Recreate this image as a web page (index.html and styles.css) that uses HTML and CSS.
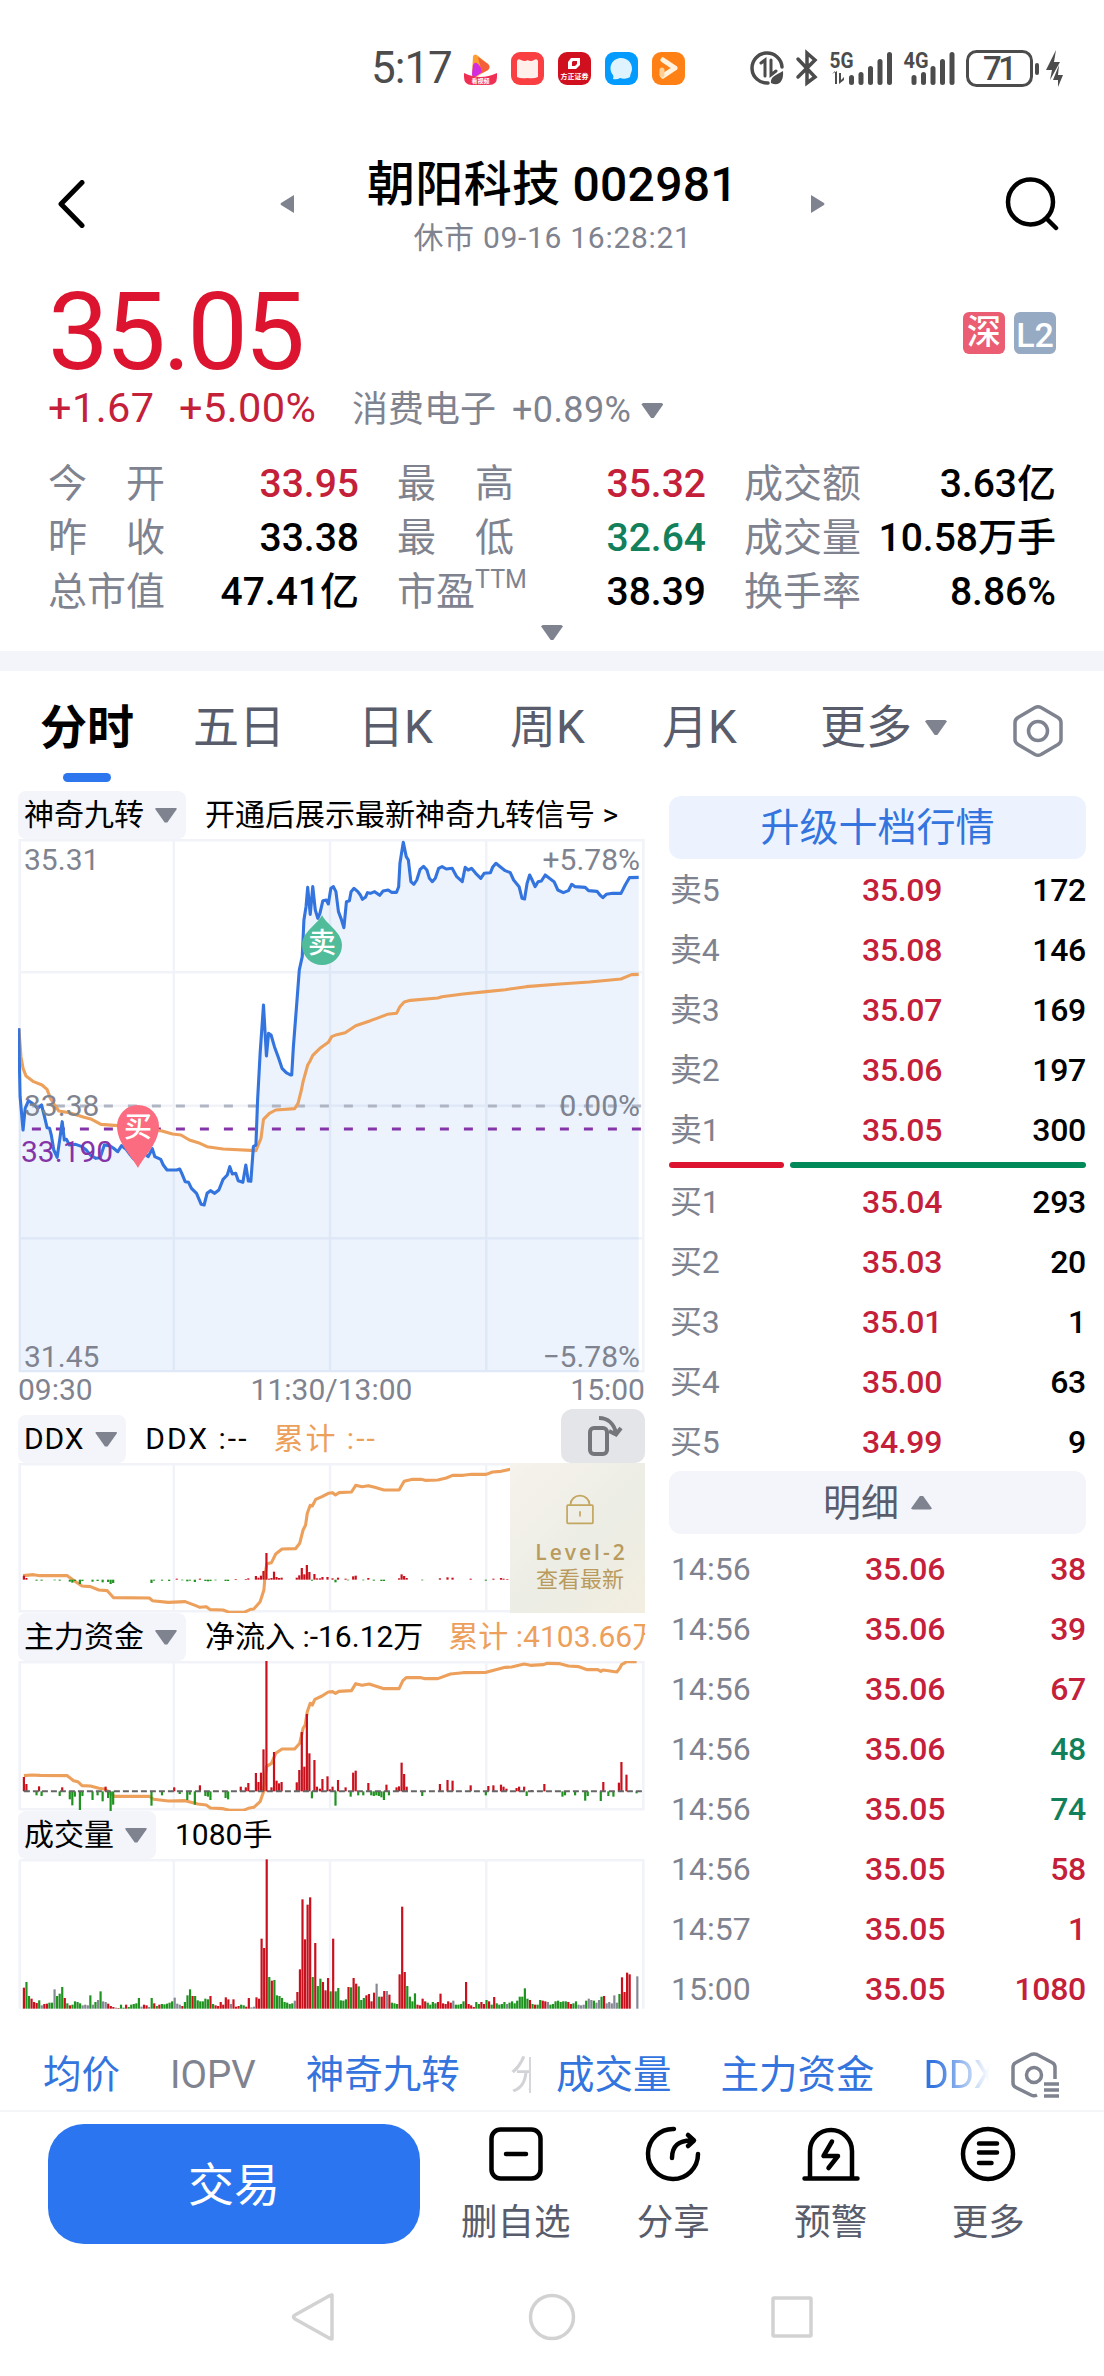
FILE: index.html
```html
<!DOCTYPE html>
<html lang="zh-CN">

<head>
    <meta charset="UTF-8">
    <meta name="viewport" content="width=device-width, initial-scale=1.0">
    <title>朝阳科技 002981</title>
    <link rel="stylesheet" href="styles.css">
</head>

<body>
    <div class="status-bar">
        <span class="clock">5:17</span>
        <div class="app-icons">
            <svg viewBox="0 0 33 33">
                <path d="M9 4 Q11 1 14 4 L24 12 Q27 15 24 18 L12 25 Q8 26 8 22 Z" fill="#ff9d2e" />
                <path d="M9 13 Q11 9 14 12 L20 19 L11 25 Q8 25 8 22 Z" fill="#d32be0" />
                <path d="M14 5 L24 12 Q27 15 24 18 L18 21 Z" fill="#f4603a" />
                <path d="M0 21 Q16 29 33 21 V25 Q33 33 25 33 H8 Q0 33 0 25 Z" fill="#f02f54" />
                <text x="16.500" y="31" class="app-text">看视频</text>
            </svg>
            <svg viewBox="0 0 33 33">
                <rect width="33" height="33" rx="9" fill="#f93f41" />
                <path d="M6 9 Q7 6 10 8 Q14 10 16.500 8 Q20 10 23 8 Q26 6 27 9 V25 Q23 27 16.500 26 Q10 27 6 25 Z" fill="#fff0ec" />
            </svg>
            <svg viewBox="0 0 33 33">
                <rect width="33" height="33" rx="9" fill="#d0101f" />
                <path d="M13 6 H22 V13 L18 17 H10 V10 Z M14 10 V14 H17 L19 12 V9 H15 Z" fill="#fff" fill-rule="evenodd" />
                <text x="16.500" y="27" class="app-text app-text-lg">方正证券</text>
            </svg>
            <svg viewBox="0 0 33 33">
                <rect width="33" height="33" rx="9" fill="#049bff" />
                <path d="M16 6 C23 6 27 11 27 17 C27 20 25 22 25 25 C22 27 18 27 15 26 Q12 28 8 27 Q9 25 8 23 C2 15 8 6 16 6 Z" fill="#dff3ff" />
            </svg>
            <svg viewBox="0 0 33 33">
                <rect width="33" height="33" rx="9" fill="#ff8115" />
                <path d="M11 8 L23 16 L11 24" fill="none" stroke="#fff3df" stroke-width="5" stroke-linecap="round" stroke-linejoin="round" />
                <path d="M10 18 V23" stroke="#ffcf96" stroke-width="5" stroke-linecap="round" />
            </svg>
        </div>
        <svg class="system-icons" viewBox="750 46 314 42">
            <g fill="none" stroke="#4c4c4c" stroke-width="3.500" stroke-linecap="round">
                <path d="M768 82 A15 15 0 1 1 782 66" />
                <path d="M761 62 L765 59 V75 M771 59 V74 L776 70" stroke-width="3" />
                <path d="M798 58 L815 76 L807 82 V52 L815 59 L798 76" />
                <rect x="967.500" y="50.500" width="64" height="34" rx="9" stroke-width="3" />
                <path d="M1037 64 V72" stroke-width="4" />
            </g>
            <g fill="#4c4c4c">
                <path d="M783 70 C784 80 779 86 771 82 C770 76 776 74 783 70 Z" />
                <path d="M832 73 L835 70 V83 H837 V70 M839 72 V83 L844 79 V76 L841 79 V72 Z" />
                <rect x="849" y="74" width="5" height="10" rx="2.500" />
                <rect x="858.500" y="71" width="5" height="13" rx="2.500" />
                <rect x="868" y="65" width="5" height="19" rx="2.500" />
                <rect x="877.500" y="58" width="5" height="26" rx="2.500" />
                <rect x="887" y="51" width="5" height="33" rx="2.500" />
                <rect x="911.500" y="74" width="5" height="10" rx="2.500" />
                <rect x="921" y="71" width="5" height="13" rx="2.500" />
                <rect x="930.500" y="65" width="5" height="19" rx="2.500" />
                <rect x="940" y="58" width="5" height="26" rx="2.500" />
                <rect x="949.500" y="51" width="5" height="33" rx="2.500" />
                <path d="M1056 49 L1046 69 H1052 L1050 79 L1060 61 H1054 Z M1059 64 L1058 74 H1063 L1058 86 L1058 79 H1053 Z" />
                <text x="829.500" y="67" font-size="22" textLength="24" lengthAdjust="spacingAndGlyphs" class="net">5G</text>
                <text x="903.500" y="67" font-size="22" textLength="25" lengthAdjust="spacingAndGlyphs" class="net">4G</text>
                <text x="983" y="79" font-size="33" textLength="34" class="bat">71</text>
            </g>
        </svg>
    </div>

    <header class="title-bar">
        <svg class="back" viewBox="0 0 28 48"><path d="M25 2.500 L4 24 L25 45.500" /></svg>
        <svg class="prev" viewBox="0 0 15 20"><path d="M14 1 V19 L1 11 Q0 10 1 9 Z" /></svg>
        <div class="title">
            <h1>朝阳科技 002981</h1>
            <p>休市 09-16 16:28:21</p>
        </div>
        <svg class="next" viewBox="0 0 15 20"><path d="M1 1 V19 L14 11 Q15 10 14 9 Z" /></svg>
        <svg class="search" viewBox="0 0 54 54"><circle cx="25.500" cy="25" r="22.500" /><path d="M42 42 L51 51" /></svg>
    </header>

    <section class="quote">
        <div class="price-row">
            <span class="price">35.05</span>
            <div class="badges"><span class="badge sz">深</span><span class="badge l2">L2</span></div>
        </div>
        <div class="change-row">
            <span class="change">+1.67</span>
            <span class="change pct">+5.00%</span>
            <span class="sector">消费电子</span>
            <span class="sector-pct">+0.89%</span>
            <i class="tri-down"></i>
        </div>
        <div class="stats">
            <span class="wide">今开</span><b class="red">33.95</b>
            <span class="wide">最高</span><b class="red">35.32</b>
            <span>成交额</span><b>3.63亿</b>
            <span class="wide">昨收</span><b>33.38</b>
            <span class="wide">最低</span><b class="green">32.64</b>
            <span>成交量</span><b>10.58万手</b>
            <span>总市值</span><b>47.41亿</b>
            <span>市盈<sup>TTM</sup></span><b>38.39</b>
            <span>换手率</span><b>8.86%</b>
        </div>
        <i class="tri-down expand"></i>
    </section>

    <nav class="period-tabs">
        <span class="tab active">分时</span>
        <span class="tab">五日</span>
        <span class="tab">日K</span>
        <span class="tab">周K</span>
        <span class="tab">月K</span>
        <span class="tab more">更多<i class="tri-down"></i></span>
        <svg class="hex" viewBox="0 0 50 54">
            <path d="M22 3.500 Q25 2 28 3.500 L45 13.500 Q48 15.500 48 18.500 V35.500 Q48 38.500 45 40.500 L28 50.500 Q25 52 22 50.500 L5 40.500 Q2 38.500 2 35.500 V18.500 Q2 15.500 5 13.500 Z" />
            <circle cx="25" cy="27" r="9.500" />
        </svg>
    </nav>

    <main class="market">
        <div class="charts">
            <div class="chart-head">
                <span class="chip">神奇九转<i class="tri-down"></i></span>
                <span class="info">开通后展示最新神奇九转信号 &gt;</span>
            </div>
            <div class="chart main-chart">
                <svg class="plot" viewBox="43 177 1489 1602" preserveAspectRatio="none">
                    <path class="grid" d="M47 181 H1528 V1774 H47 Z M413 181 V1774 M784 181 V1774 M1155 181 V1774 M47 577 H1528 M47 977 H1528 M47 1375 H1528" />
                    <path class="area" id="priceArea" />
                    <path class="zero" d="M76 978 H1524" />
                    <path class="cost" d="M76 1047 H1524" />
                    <polyline class="avg" points="45,745 50,830 55,865 62,888 80,905 100,915 112,928 120,955 130,975 140,993 165,998 200,1012 218,1018 240,1033 280,1037 325,1043 385,1053 410,1062 430,1065 450,1080 475,1090 492,1100 530,1107 608,1112 620,1075 626,1018 640,1000 655,990 700,986 708,970 716,930 720,905 731,855 737,842 743,826 760,805 780,787 788,770 800,764 820,758 845,737 880,722 895,715 920,703 942,700 950,680 960,666 975,661 1040,654 1050,650 1100,642 1155,635 1200,629 1250,620 1330,612 1400,606 1475,597 1500,584 1517,583" />
                    <polyline class="line" id="priceLine" />
                </svg>
                <span class="label top-left">35.31</span>
                <span class="label top-right">+5.78%</span>
                <span class="label mid-left">33.38</span>
                <span class="label mid-right">0.00%</span>
                <span class="label cost-label">33.190</span>
                <span class="label bottom-left">31.45</span>
                <span class="label bottom-right">−5.78%</span>
                <svg class="pin buy" viewBox="0 0 42 64">
                    <path d="M21 63 C14 50 0 38 0 21 A21 21 0 0 1 42 21 C42 38 28 50 21 63 Z" fill="#fb6c80" />
                    <text x="21" y="32">买</text>
                </svg>
                <svg class="pin sell" viewBox="0 0 42 52">
                    <path d="M21 1 C25 10 41 18 41 31 A20 20 0 0 1 1 31 C1 18 17 10 21 1 Z" fill="#50bc99" />
                    <text x="21" y="39">卖</text>
                </svg>
            </div>
            <div class="axis"><span>09:30</span><span>11:30/13:00</span><span>15:00</span></div>

            <div class="chart-head ddx-head">
                <span class="chip">DDX<i class="tri-down"></i></span>
                <span class="info">DDX :--</span>
                <span class="info orange">累计 :--</span>
                <span class="rotate">
                    <svg viewBox="0 0 36 40">
                        <rect x="3" y="12" width="17" height="26" rx="4" />
                        <path d="M12 2 C21 2 27 8 29 17 M22 15 L29 18.500 L34 12" />
                    </svg>
                </span>
            </div>
            <div class="chart sub-chart">
                <svg class="plot" viewBox="43 189 1489 450" preserveAspectRatio="none">
                    <path class="grid" d="M47 193 H1528 V634 H47 Z M413 193 V634 M784 193 V634 M1155 193 V634" />
                    <polyline class="avg" points="55,527 80,524 95,527 160,527 180,545 195,558 215,560 235,570 255,572 270,593 355,594 362,602 400,607 440,605 465,617 475,622 490,620 500,629 530,630 545,637 580,637 595,628 603,627 618,605 627,570 630,520 634,491 645,488 655,462 670,447 702,446 712,430 720,390 726,375 730,340 737,316 742,318 750,298 765,290 780,280 790,278 797,285 805,278 835,276 845,256 860,260 875,257 890,262 912,270 948,270 960,244 980,238 1000,238 1010,241 1040,240 1060,234 1075,226 1100,226 1120,223 1155,223 1170,216 1190,214 1212,208" />
                    <g id="ddxBars"></g>
                </svg>
                <div class="level2">
                    <svg viewBox="0 0 34 36">
                        <rect x="2" y="13" width="30" height="21" rx="1" />
                        <path d="M6 13 V12 A11 10 0 0 1 28 12 V13 M17 20 V26" />
                    </svg>
                    <b>Level-2</b>
                    <span>查看最新</span>
                </div>
            </div>

            <div class="chart-head">
                <span class="chip">主力资金<i class="tri-down"></i></span>
                <span class="info">净流入 :-16.12万</span>
                <span class="info orange">累计 :4103.66万</span>
            </div>
            <div class="chart sub-chart">
                <svg class="plot" viewBox="43 153 1489 450" preserveAspectRatio="none">
                    <path class="grid" d="M47 157 H1528 V598 H47 Z M413 157 V598 M784 157 V598 M1155 157 V598" />
                    <polyline class="avg" points="57,497 75,495 95,496 160,497 175,512 185,515 195,527 215,528 235,535 248,537 258,545 272,559 355,559 365,568 400,573 440,572 470,582 490,585 500,594 530,596 545,601 578,601 590,595 603,592 618,575 626,545 633,470 645,460 655,430 670,417 700,417 712,400 720,355 725,345 730,305 737,280 742,285 748,268 765,258 780,246 790,245 797,250 805,244 835,242 845,221 860,226 877,222 912,236 948,236 957,212 965,203 1000,203 1010,206 1040,206 1070,192 1100,188 1155,187 1175,180 1200,172 1215,171 1245,162 1260,166 1290,164 1300,160 1330,161 1350,168 1375,170 1395,179 1420,179 1427,184 1432,180 1445,182 1465,186 1472,175 1477,163 1482,160 1488,155 1512,155" />
                    <g id="fundBars"></g>
                    <path class="fund-zero" d="M57 544 H1530" />
                </svg>
            </div>

            <div class="chart-head">
                <span class="chip">成交量<i class="tri-down"></i></span>
                <span class="info">1080手</span>
            </div>
            <div class="chart sub-chart">
                <svg class="plot" viewBox="43 747 1489 450" preserveAspectRatio="none">
                    <path class="grid" d="M47 751 H1528 V1196 M47 751 V1196 M413 751 V1196 M784 751 V1196 M1155 751 V1196" />
                    <g id="volBars"></g>
                </svg>
            </div>
        </div>

        <aside class="book">
            <div class="upgrade">升级十档行情</div>
            <div class="row"><span>卖5</span><b>35.09</b><b class="qty">172</b></div>
            <div class="row"><span>卖4</span><b>35.08</b><b class="qty">146</b></div>
            <div class="row"><span>卖3</span><b>35.07</b><b class="qty">169</b></div>
            <div class="row"><span>卖2</span><b>35.06</b><b class="qty">197</b></div>
            <div class="row"><span>卖1</span><b>35.05</b><b class="qty">300</b></div>
            <div class="ratio"><i class="ratio-buy"></i><i class="ratio-sell"></i></div>
            <div class="row"><span>买1</span><b>35.04</b><b class="qty">293</b></div>
            <div class="row"><span>买2</span><b>35.03</b><b class="qty">20</b></div>
            <div class="row"><span>买3</span><b>35.01</b><b class="qty">1</b></div>
            <div class="row"><span>买4</span><b>35.00</b><b class="qty">63</b></div>
            <div class="row"><span>买5</span><b>34.99</b><b class="qty">9</b></div>
            <div class="detail-head">明细<i class="tri-up"></i></div>
            <div class="row tick"><span>14:56</span><b>35.06</b><b class="qty red">38</b></div>
            <div class="row tick"><span>14:56</span><b>35.06</b><b class="qty red">39</b></div>
            <div class="row tick"><span>14:56</span><b>35.06</b><b class="qty red">67</b></div>
            <div class="row tick"><span>14:56</span><b>35.06</b><b class="qty green">48</b></div>
            <div class="row tick"><span>14:56</span><b>35.05</b><b class="qty green">74</b></div>
            <div class="row tick"><span>14:56</span><b>35.05</b><b class="qty red">58</b></div>
            <div class="row tick"><span>14:57</span><b>35.05</b><b class="qty red">1</b></div>
            <div class="row tick"><span>15:00</span><b>35.05</b><b class="qty red">1080</b></div>
        </aside>
    </main>

    <div class="indicator-bar">
        <div class="group overlay-group">
            <span>均价</span><span class="off">IOPV</span><span>神奇九转</span><span class="off cut">分</span>
        </div>
        <div class="group sub-group">
            <span>成交量</span><span>主力资金</span><span class="fade">DDX</span>
        </div>
        <svg class="hex-menu" viewBox="0 0 50 46">
            <path d="M44 27 V15 Q44 12 41 10.500 L26 2.500 Q23 1.500 20 2.500 L5 10.500 Q2 12 2 15 V31 Q2 34 5 35.500 L20 43 Q23 44.500 26 43" />
            <circle cx="23" cy="23" r="7.500" />
            <path d="M33 32 H48 M33 38 H48 M33 44 H48" />
        </svg>
    </div>

    <footer class="action-bar">
        <button class="trade" type="button">交易</button>
        <div class="action">
            <svg viewBox="0 0 58 58"><rect x="4.500" y="4.500" width="49" height="49" rx="9" /><path d="M19 29 H39" /></svg>
            <span>删自选</span>
        </div>
        <div class="action">
            <svg viewBox="0 0 58 58"><path d="M30 4 A25 25 0 1 0 54 29" /><path d="M28 33 Q28 15 48 15.500 M44 10 L50 15.500 L44 21" /></svg>
            <span>分享</span>
        </div>
        <div class="action">
            <svg viewBox="0 0 58 58"><path d="M8 52 V26 A21 21 0 0 1 50 26 V52 M2.500 53.500 H55.500" /><path d="M30 16.500 L21.500 31 H36 L26.500 43" /></svg>
            <span>预警</span>
        </div>
        <div class="action">
            <svg viewBox="0 0 58 58"><circle cx="29" cy="29" r="25" /><path d="M20 18.500 H38 M20 27.500 H38 M20 38 H32.500" /></svg>
            <span>更多</span>
        </div>
    </footer>

    <div class="system-nav">
        <svg viewBox="0 0 50 50"><path d="M45 3 V47 Q45 47 42 46 L8 27 Q5 25 8 23 L42 4 Z" /></svg>
        <svg viewBox="0 0 50 50"><circle cx="25" cy="25" r="21.500" /></svg>
        <svg viewBox="0 0 50 50"><rect x="6" y="6" width="38" height="38" rx="1" /></svg>
    </div>

    <script src="script.js"></script>
</body>

</html>
```
FILE: styles.css
```css
* {
    box-sizing: border-box;
}

body {
    margin: 0;
    width: 1104px;
    height: 2376px;
    overflow: hidden;
    background: #fff;
    color: #000;
    font-family: Roboto, "Noto Sans CJK SC", sans-serif;
}

h1, p {
    margin: 0;
}

svg {
    display: block;
    flex: none;
}

.red {
    color: #c5203a;
}

.green {
    color: #12805a;
}

.tri-down, .tri-up {
    display: block;
    flex: none;
    width: 22px;
    height: 15px;
    background: #7f838f;
    clip-path: polygon(0 8%, 8% 0, 92% 0, 100% 8%, 56% 100%, 44% 100%);
}

.tri-up {
    width: 21px;
    height: 14px;
    clip-path: polygon(0 92%, 44% 0, 56% 0, 100% 92%, 92% 100%, 8% 100%);
}

/* system status bar */
.status-bar {
    display: flex;
    align-items: center;
    height: 136px;
    padding-left: 371px;
}

.clock {
    width: 93px;
    font-size: 44px;
    line-height: 50px;
    letter-spacing: -1px;
    color: #4c4c4c;
}

.app-icons {
    display: flex;
    gap: 14px;
    width: 286px;
}

.app-icons svg {
    width: 33px;
    height: 33px;
}

.app-text {
    font-size: 6px;
    font-weight: 700;
    text-anchor: middle;
    fill: #fff;
}

.app-text-lg {
    font-size: 7px;
}

.system-icons {
    width: 314px;
    height: 42px;
}

.net {
    font-weight: 700;
}

.bat {
    font-weight: 500;
}

/* stock title */
.title-bar {
    display: flex;
    align-items: center;
    height: 136px;
    padding: 0 45px 0 57px;
}

.back {
    width: 28px;
    height: 48px;
    fill: none;
    stroke: #000;
    stroke-width: 5;
    stroke-linecap: round;
    stroke-linejoin: round;
}

.prev, .next {
    width: 15px;
    height: 20px;
    fill: #7f838f;
}

.prev {
    margin-left: 195px;
}

.title {
    width: 515px;
    height: 136px;
    padding-top: 17px;
    text-align: center;
}

.title h1 {
    font-size: 48px;
    line-height: 64px;
    font-weight: 500;
    letter-spacing: 0.3px;
}

.title p {
    font-size: 30px;
    line-height: 41px;
    letter-spacing: 0.7px;
    color: #7f838f;
}

.search {
    width: 54px;
    height: 54px;
    margin-left: auto;
    fill: none;
    stroke: #000;
    stroke-width: 4.5;
    stroke-linecap: round;
}

/* quote */
.quote {
    height: 399px;
    padding: 0 48px;
    border-bottom: 20px solid #f3f5fa;
}

.price-row {
    display: flex;
    justify-content: space-between;
    height: 109px;
}

.price {
    font-size: 108px;
    line-height: 120px;
    letter-spacing: -3.5px;
    color: #dc142f;
}

.badges {
    display: flex;
    gap: 9px;
    padding-top: 40px;
}

.badge {
    width: 42px;
    height: 42px;
    border-radius: 6px;
    color: #fff;
    font-size: 34px;
    font-weight: 500;
    line-height: 40px;
    text-align: center;
}

.badge.sz {
    background: #ea5d72;
}

.badge.l2 {
    background: #97aac3;
    line-height: 46px;
}

.change-row {
    display: flex;
    align-items: baseline;
    height: 76px;
    line-height: 54px;
}

.change {
    width: 131px;
    font-size: 41.5px;
    letter-spacing: 0.4px;
    color: #c5203a;
}

.change.pct {
    width: 173px;
}

.sector, .sector-pct {
    width: 160px;
    font-size: 36px;
    color: #7f838f;
}

.sector-pct {
    width: auto;
    margin-right: 10px;
    letter-spacing: 0.4px;
}

.change-row .tri-down {
    align-self: flex-start;
    margin-top: 22px;
}

.stats {
    display: grid;
    grid-template-columns: 115px 196px 173px 174px 153px 197px;
    grid-auto-rows: 54px;
    height: 168px;
    font-size: 39px;
    line-height: 54px;
    white-space: nowrap;
}

.stats > span {
    color: #7f838f;
}

.stats > span:nth-child(6n+3), .stats > span:nth-child(6n+5) {
    padding-left: 38px;
}

.stats .wide {
    letter-spacing: 39px;
}

.stats b {
    font-weight: 500;
    text-align: right;
}

.stats sup {
    position: relative;
    top: -17px;
    font-size: 25px;
    line-height: 0;
    vertical-align: baseline;
}

.expand {
    margin: 0 auto;
}

/* period tabs */
.period-tabs {
    display: flex;
    height: 120px;
    padding: 0 41px 0 40px;
    font-size: 46px;
    line-height: 113px;
    color: #585c6b;
}

.tab {
    position: relative;
    margin-right: 60px;
    height: 113px;
    white-space: nowrap;
}

.tab:nth-child(2) {
    margin-right: 73px;
}

.tab:nth-child(3), .tab:nth-child(4) {
    width: 75px;
    margin-right: 77px;
}

.tab:nth-child(5) {
    width: 76px;
    margin-right: 82px;
}

.tab.active {
    margin-right: 59px;
    font-size: 47px;
    font-weight: 700;
    color: #000;
}

.tab.active::after {
    content: "";
    position: absolute;
    left: 23px;
    top: 102px;
    width: 48px;
    height: 9px;
    border-radius: 5px;
    background: #2e76ee;
}

.tab.more {
    display: flex;
    align-items: center;
    gap: 13px;
    margin-right: 0;
}

.hex {
    width: 50px;
    height: 54px;
    margin-top: 33px;
    margin-left: auto;
    fill: none;
    stroke: #7f838f;
    stroke-width: 3.5;
}

/* charts + order book */
.market {
    display: flex;
    height: 1229px;
}

.charts {
    width: 627px;
    margin-left: 18px;
}

.chart-head {
    display: flex;
    align-items: center;
    height: 48px;
    overflow: hidden;
    font-size: 30px;
    line-height: 48px;
    white-space: nowrap;
}

.chip {
    display: flex;
    flex: none;
    align-items: center;
    gap: 11px;
    height: 48px;
    padding: 0 9px 0 6px;
    margin-right: 19px;
    border-radius: 8px;
    background: #f3f5fa;
}

.info {
    flex: none;
    margin-right: 25px;
}

.orange {
    color: #eca05b;
}

.chart {
    position: relative;
    overflow: hidden;
}

.main-chart {
    height: 534px;
}

.sub-chart {
    height: 150px;
}

.plot {
    width: 627px;
    height: 100%;
}

.plot path, .plot polyline {
    fill: none;
    vector-effect: non-scaling-stroke;
}

.plot .grid {
    stroke: #f1f3f9;
    stroke-width: 2.5;
}

.plot .area {
    fill: rgba(46, 118, 238, 0.09);
}

.plot .zero {
    stroke: #b0b5c4;
    stroke-width: 3;
    stroke-dasharray: 9 15;
}

.plot .cost {
    stroke: #8434a8;
    stroke-width: 3;
    stroke-dasharray: 9 15;
}

.plot .avg {
    stroke: #eca05b;
    stroke-width: 3.1;
    stroke-linejoin: round;
}

.plot .line {
    stroke: #3374de;
    stroke-width: 3.1;
    stroke-linejoin: round;
}

.plot .fund-zero {
    stroke: #666;
    stroke-width: 2;
    stroke-dasharray: 6 3;
}

.bar-up {
    fill: #c9101d;
}

.bar-down {
    fill: #1f931f;
}

.bar-flat {
    fill: #858994;
}

.label {
    position: absolute;
    font-size: 30px;
    line-height: 30px;
    color: #7f838f;
}

.top-left {
    left: 6px;
    top: 6px;
}

.top-right {
    right: 5px;
    top: 6px;
}

.mid-left {
    left: 6px;
    top: 252px;
}

.mid-right {
    right: 5px;
    top: 252px;
}

.cost-label {
    left: 3px;
    top: 298px;
    color: #8434a8;
}

.bottom-left {
    left: 6px;
    bottom: 1px;
}

.bottom-right {
    right: 5px;
    bottom: 1px;
}

.pin {
    position: absolute;
    width: 42px;
}

.pin text {
    font-size: 28px;
    font-weight: 500;
    text-anchor: middle;
    fill: #fff;
}

.pin.buy {
    left: 99px;
    top: 266px;
    height: 64px;
}

.pin.sell {
    left: 283px;
    top: 75px;
    height: 52px;
}

.axis {
    display: flex;
    justify-content: space-between;
    height: 36px;
    font-size: 30px;
    line-height: 33px;
    color: #7f838f;
}

.ddx-head {
    height: 54px;
    align-items: flex-end;
}

.ddx-head .chip {
    letter-spacing: 0.8px;
}

.ddx-head .info {
    letter-spacing: 2px;
}

.rotate {
    display: flex;
    align-items: center;
    justify-content: center;
    width: 84px;
    height: 54px;
    margin-left: auto;
    border-radius: 12px 12px 10px 10px;
    background: #e4e5e9;
}

.rotate svg {
    width: 36px;
    height: 40px;
    margin-left: 4px;
    fill: none;
    stroke: #74767b;
    stroke-width: 4;
}

.level2 {
    position: absolute;
    right: 0;
    top: 0;
    display: flex;
    flex-direction: column;
    align-items: center;
    width: 135px;
    height: 150px;
    padding-top: 31px;
    padding-left: 5px;
    background: linear-gradient(135deg, #f6f2ec, #ecede5 55%, #f3eee0);
    color: #b99b5e;
    line-height: 26px;
}

.level2 svg {
    width: 32px;
    height: 31px;
    margin-bottom: 13px;
    fill: none;
    stroke: #c3a660;
    stroke-width: 2;
}

.level2 b {
    font: 600 21px/28px "Open Sans", sans-serif;
    letter-spacing: 3px;
    margin-right: -3px;
}

.level2 span {
    font-size: 22px;
    line-height: 28px;
}

/* order book */
.book {
    width: 417px;
    margin-left: 24px;
    padding-top: 5px;
}

.upgrade, .detail-head {
    display: flex;
    align-items: center;
    justify-content: center;
    height: 63px;
    border-radius: 12px;
    background: #ecf3fe;
    color: #3374de;
    font-size: 39px;
}

.upgrade {
    line-height: 60px;
}

.detail-head {
    gap: 12px;
    margin-bottom: 5px;
    background: #f4f5fa;
    color: #585c6b;
    font-size: 38px;
    line-height: 60px;
}

.row {
    display: grid;
    grid-template-columns: 192px 110px 1fr;
    height: 60px;
    padding: 0 0 0 1px;
    font-size: 32px;
    line-height: 62px;
    letter-spacing: -0.3px;
}

.row span {
    color: #7f838f;
}

.row b {
    font-weight: 500;
    color: #c5203a;
}

.row .qty {
    color: #000;
    text-align: right;
}

.row .qty.red {
    color: #c5203a;
}

.row .qty.green {
    color: #12805a;
}

.row.tick {
    grid-template-columns: 195px 110px 1fr;
    line-height: 61px;
}

.row.tick span {
    padding-left: 1px;
    letter-spacing: 0;
}

.ratio {
    display: flex;
    gap: 6px;
    height: 12px;
    padding-top: 3px;
}

.ratio i {
    height: 6px;
    border-radius: 3px;
}

.ratio-buy {
    width: 115px;
    background: #dc142f;
}

.ratio-sell {
    flex: 1;
    background: #008a5a;
}

/* indicator switcher */
.indicator-bar {
    display: flex;
    align-items: center;
    height: 92px;
    padding-top: 20px;
    padding-left: 43px;
    border-bottom: 2px solid #f5f6f8;
    font-size: 38.5px;
    line-height: 68px;
    color: #3374de;
    white-space: nowrap;
}

.group {
    display: flex;
    overflow: hidden;
}

.overlay-group {
    gap: 50px;
    width: 488px;
    height: 68px;
    background: linear-gradient(#d5d7db, #d5d7db) right center / 2px 36px no-repeat;
}

.indicator-bar .off {
    color: #7f838f;
}

.indicator-bar .cut {
    width: 19px;
    overflow: hidden;
    opacity: 0.35;
}

.sub-group {
    gap: 49px;
    width: 437px;
    margin-left: 25px;
}

.fade {
    -webkit-mask-image: linear-gradient(to right, #000 10px, transparent 66px);
    mask-image: linear-gradient(to right, #000 10px, transparent 66px);
}

.hex-menu {
    width: 50px;
    height: 46px;
    margin-left: 18px;
    fill: none;
    stroke: #7f838f;
    stroke-width: 3.5;
}

/* bottom actions */
.action-bar {
    display: flex;
    height: 154px;
    padding: 12px 0 0 48px;
}

.trade {
    width: 372px;
    height: 120px;
    margin-right: 17px;
    padding: 0 0 6px;
    border: none;
    border-radius: 36px;
    background: #2b75f0;
    color: #fff;
    font-family: inherit;
    font-size: 46px;
}

.action {
    display: flex;
    flex-direction: column;
    align-items: center;
    width: 157.5px;
    font-size: 36.5px;
    line-height: 52px;
    color: #585c6b;
}

.action svg {
    width: 58px;
    height: 58px;
    margin: 1px 0 14px;
    fill: none;
    stroke: #000;
    stroke-width: 4.5;
    stroke-linecap: round;
    stroke-linejoin: round;
}

.system-nav {
    display: flex;
    justify-content: center;
    gap: 190px;
    padding-top: 26px;
}

.system-nav svg {
    width: 50px;
    height: 50px;
    fill: none;
    stroke: #d2d2d2;
    stroke-width: 3.5;
    stroke-linejoin: round;
}
```
FILE: script.js
```js
const SVG_NS = 'http://www.w3.org/2000/svg';
const STEP = 6.07;

const price = [
    45,745, 46,830, 48,950, 55,1050, 60,985, 68,962, 75,968, 82,975, 90,985, 99,975, 105,1005, 112,1043, 118,1045,
    122,1065, 128,1110, 136,1132, 143,1070, 148,1025, 153,1080, 158,1078, 165,1095, 180,1093, 195,1100, 205,1110,
    215,1125, 228,1135, 238,1133, 248,1095, 262,1098, 270,1105, 280,1115, 289,1097, 300,1108, 310,1125, 318,1137,
    325,1130, 345,1122, 352,1130, 362,1106, 368,1130, 382,1138, 388,1155, 397,1170, 420,1170, 427,1167, 432,1180,
    440,1205, 448,1207, 455,1225, 467,1240, 478,1273, 485,1275, 492,1240, 500,1232, 510,1240, 520,1230, 530,1198,
    540,1185, 546,1160, 552,1182, 560,1180, 566,1202, 577,1207, 584,1155, 590,1203, 596,1204, 602,1100, 608,1095,
    612,960, 618,820, 626,675, 633,828, 638,760, 644,765, 652,800, 662,835, 670,865, 680,878, 690,885, 693,885,
    697,800, 705,670, 711,570, 718,530, 722,420, 727,380, 731,322, 737,403, 743,320, 749,390, 755,415, 760,400,
    767,362, 775,360, 780,372, 786,325, 792,320, 798,335, 804,395, 810,415, 817,443, 823,365, 830,362, 834,335,
    841,325, 850,335, 856,345, 861,358, 868,352, 873,338, 880,340, 890,335, 902,346, 910,333, 922,330, 930,337,
    942,337, 947,320, 950,250, 958,187, 965,230, 970,240, 976,305, 983,313, 990,300, 998,268, 1006,259, 1014,270,
    1020,295, 1027,305, 1034,295, 1042,265, 1050,260, 1060,267, 1074,265, 1085,290, 1098,305, 1105,262, 1112,270,
    1120,265, 1130,280, 1142,295, 1150,280, 1165,278, 1170,262, 1178,250, 1188,260, 1200,272, 1212,278, 1220,300,
    1233,320, 1240,355, 1246,357, 1252,310, 1258,285, 1264,300, 1271,320, 1278,305, 1286,303, 1295,285, 1305,295,
    1316,305, 1325,330, 1338,338, 1350,332, 1358,313, 1366,320, 1390,322, 1398,332, 1418,334, 1425,345, 1432,353,
    1440,343, 1455,340, 1475,340, 1485,315, 1495,293, 1517,292
];

// [x, value] pairs, negative values hang below the zero line
const ddx = [
    [57,12], [63,5], [87,-3], [99,-3], [130,-2], [142,-3], [166,-6], [172,-9], [178,-4], [190,-13], [196,-4], [220,-6],
    [232,-4], [244,-8], [257,-7], [263,-13], [269,-10], [360,-10], [366,-3], [385,-3], [402,-4], [420,3], [433,-2],
    [445,-5], [451,-3], [463,-7], [475,3], [488,-4], [494,-5], [500,-4], [512,-2], [536,-4], [542,-4], [560,2], [584,2],
    [590,4], [608,11], [614,6], [620,12], [626,26], [633,80], [639,3], [645,5], [651,24], [657,8], [663,5], [669,6],
    [705,6], [711,13], [717,35], [723,16], [729,44], [735,23], [741,-3], [747,17], [753,4], [760,4], [766,8], [778,8],
    [790,4], [797,-8], [803,6], [821,3], [827,-2], [839,10], [845,12], [863,-2], [875,5], [888,-3], [906,-4], [912,-4],
    [948,4], [954,16], [960,11], [966,5], [1003,-2], [1045,4], [1063,7], [1075,6], [1118,3], [1154,-3], [1172,3],
    [1190,5], [1196,3], [1205,2]
];

const fund = [
    [57,43], [63,22], [87,-12], [93,15], [99,-14], [142,-14], [148,12], [166,-24], [172,-42], [178,-16], [190,-56],
    [196,-14], [220,-26], [232,-12], [244,-30], [251,14], [257,-20], [263,-59], [269,-40], [360,-43], [385,-12],
    [414,12], [427,-8], [445,-26], [451,-10], [463,-40], [475,18], [488,-14], [494,-16], [500,-26], [536,-20],
    [542,-24], [572,14], [584,12], [590,25], [608,55], [614,28], [620,56], [626,126], [633,392], [645,12], [651,118],
    [657,32], [663,24], [669,28], [705,27], [711,64], [717,178], [723,74], [729,232], [735,114], [741,-21], [747,94],
    [753,14], [760,8], [766,37], [778,45], [784,6], [790,14], [797,-43], [803,34], [821,12], [833,-16], [839,56],
    [845,62], [851,-12], [863,-12], [875,25], [882,-12], [888,-14], [894,-12], [900,-14], [906,-18], [912,-26],
    [918,20], [924,-12], [942,12], [948,15], [954,86], [960,52], [966,14], [1003,-14], [1045,22], [1063,34],
    [1075,32], [1118,18], [1154,-12], [1160,16], [1172,18], [1190,20], [1196,14], [1203,8], [1227,10], [1233,14],
    [1245,14], [1251,-14], [1263,4], [1293,22], [1336,-16], [1342,-12], [1366,-12], [1390,-28], [1396,-14],
    [1427,-29], [1433,28], [1445,-14], [1457,-16], [1470,26], [1476,88], [1488,50], [1512,-6]
];

// one entry per minute: r = up, g = down, n = unchanged
const volume = `r63 g80 g38 r30 r20 r17 g25 n10 r14 r15 g18 g18 n58 g38 g45 g65 r32 g16 r10 g12
g22 g20 g16 n10 n12 n10 g40 n12 g20 n26 g52 n22 n20 r15 r8 r5 n3 r2 g12 g3
r12 g5 g12 g14 g16 g32 n6 r12 r10 n5 g32 r16 g8 r12 g14 g13 g15 g18 g22 n33
n15 n12 r8 g20 g40 g58 r38 g38 g25 g22 g22 g30 g28 r38 g14 r10 r8 r20 r12 r34
r28 n14 r28 r6 r8 g12 g10 r6 r32 n4 n6 r34 r30 r210 r182 r448 g95 r84 g86 g40
g38 g32 g20 g18 g14 g16 n24 r50 r118 r328 r208 r312 r334 g95 r197 g68 g90 r80 r55 r92
g52 r210 g52 g62 g25 g24 g28 r65 g64 r92 r75 g67 g26 g32 r40 r44 r22 r48 n75 g36
r36 r53 n53 r42 g18 g16 g14 r103 r306 r110 g68 g36 g22 g46 r12 r10 r30 r22 g18 g12
g20 g16 r20 r45 r16 r14 r22 r18 n24 g12 g12 g14 g22 r80 r14 r10 r5 g20 g14 r20
r14 g26 r22 g12 r35 g16 g12 g14 g20 n14 g18 g22 g16 g24 g36 g36 g61 g30 r26 g14
r12 g12 g26 r24 r22 n20 g12 g14 g22 g24 g20 g22 g22 r20 r14 g16 g22 n12 n10 n12
g24 n30 n26 g24 n18 n26 g36 r38 n16 n20 n16 n40 n18 g44 r94 r50 r108 r103 n0 n0 n97`.split(/\s+/);

function addBar(group, x, y, height, type) {
    const rect = document.createElementNS(SVG_NS, 'rect');
    rect.setAttribute('x', x - 2.6);
    rect.setAttribute('y', y);
    rect.setAttribute('width', 5.2);
    rect.setAttribute('height', height);
    rect.setAttribute('class', type);
    group.appendChild(rect);
}

function drawSigned(id, data, zero) {
    const group = document.getElementById(id);
    data.forEach(([x, v]) => {
        addBar(group, x, v > 0 ? zero - v : zero, Math.abs(v), v > 0 ? 'bar-up' : 'bar-down');
    });
}

function drawVolume() {
    const types = { r: 'bar-up', g: 'bar-down', n: 'bar-flat' };
    const group = document.getElementById('volBars');
    volume.forEach((item, i) => {
        const h = Number(item.slice(1));
        addBar(group, 57 + i * STEP, 1196 - h, h, types[item[0]]);
    });
}

const points = price.join(' ');
document.getElementById('priceLine').setAttribute('points', points);
document.getElementById('priceArea').setAttribute('d', `M${points} V1776 H45 Z`);

drawSigned('ddxBars', ddx, 539);
drawSigned('fundBars', fund, 544);
drawVolume();
```
